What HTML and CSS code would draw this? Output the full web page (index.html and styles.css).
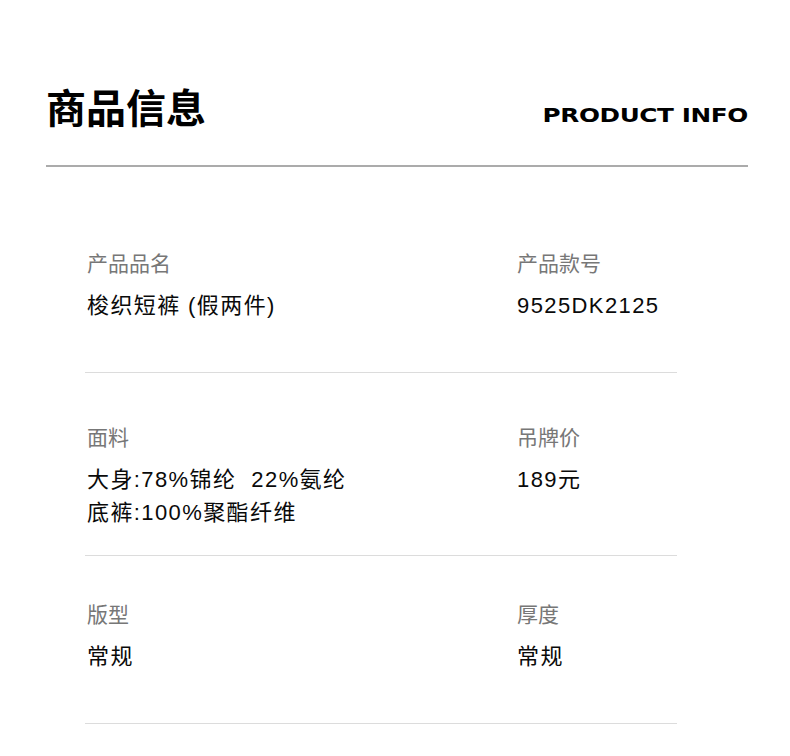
FILE: index.html
```html
<!DOCTYPE html>
<html lang="zh-CN">
<head>
  <meta charset="UTF-8">
  <meta name="viewport" content="width=device-width, initial-scale=1.0">
  <title>商品信息</title>
  <link rel="stylesheet" href="styles.css">
</head>
<body>

  <div class="page">
    <!-- Section header -->
    <header class="head">
      <h1 class="head-title">商品信息</h1>
      <span class="head-en">PRODUCT INFO</span>
    </header>

    <!-- Spec table -->
    <div class="specs">
      <div class="spec-row spec-row--first">
        <div class="spec">
          <div class="spec-label">产品品名</div>
          <div class="spec-value">梭织短裤 (假两件)</div>
        </div>
        <div class="spec">
          <div class="spec-label">产品款号</div>
          <div class="spec-value">9525DK2125</div>
        </div>
      </div>

      <div class="spec-row spec-row--multi">
        <div class="spec">
          <div class="spec-label">面料</div>
          <div class="spec-value">大身:78%锦纶&nbsp; 22%氨纶<br>底裤:100%聚酯纤维</div>
        </div>
        <div class="spec">
          <div class="spec-label">吊牌价</div>
          <div class="spec-value">189元</div>
        </div>
      </div>

      <div class="spec-row">
        <div class="spec">
          <div class="spec-label">版型</div>
          <div class="spec-value">常规</div>
        </div>
        <div class="spec">
          <div class="spec-label">厚度</div>
          <div class="spec-value">常规</div>
        </div>
      </div>
    </div>
  </div>

</body>
</html>
```

FILE: styles.css
```css
body {
  margin: 0;
  background: #fff;
  color: #111;
  font-family: "Liberation Sans", "Noto Sans CJK SC", sans-serif;
}
.page {
  padding: 0 42px 0 46px;
}
.head {
  display: flex;
  justify-content: space-between;
  align-items: flex-end;
  padding-top: 86px;
  padding-bottom: 39px;
  border-bottom: 2px solid #ababab;
}
.head-title {
  margin: 0;
  font-family: "Noto Sans CJK SC", sans-serif;
  font-size: 40px;
  line-height: 40px;
  font-weight: 700;
  color: #000;
}
.head-en {
  display: inline-block;
  margin-bottom: 1px;
  font-family: "DejaVu Sans", sans-serif;
  font-size: 19px;
  line-height: 19px;
  font-weight: 700;
  letter-spacing: -0.3px;
  color: #000;
  transform: scaleX(1.3);
  transform-origin: right bottom;
}
.specs {
  margin: 0 71px 0 39px;
}
.spec-row {
  display: grid;
  grid-template-columns: 430px 1fr;
  padding: 48px 0 50px 2px;
  border-bottom: 1px solid #dcdcdc;
}
.spec-row--first {
  padding-top: 86px;
  padding-bottom: 50px;
}
.spec-row--multi {
  padding-top: 54px;
  padding-bottom: 26px;
}
.spec-label {
  font-size: 21px;
  line-height: 21px;
  color: #777;
  margin-bottom: 15px;
}
.spec-value {
  font-size: 22px;
  line-height: 33px;
  letter-spacing: 1.4px;
  color: #0a0a0a;
}
```
